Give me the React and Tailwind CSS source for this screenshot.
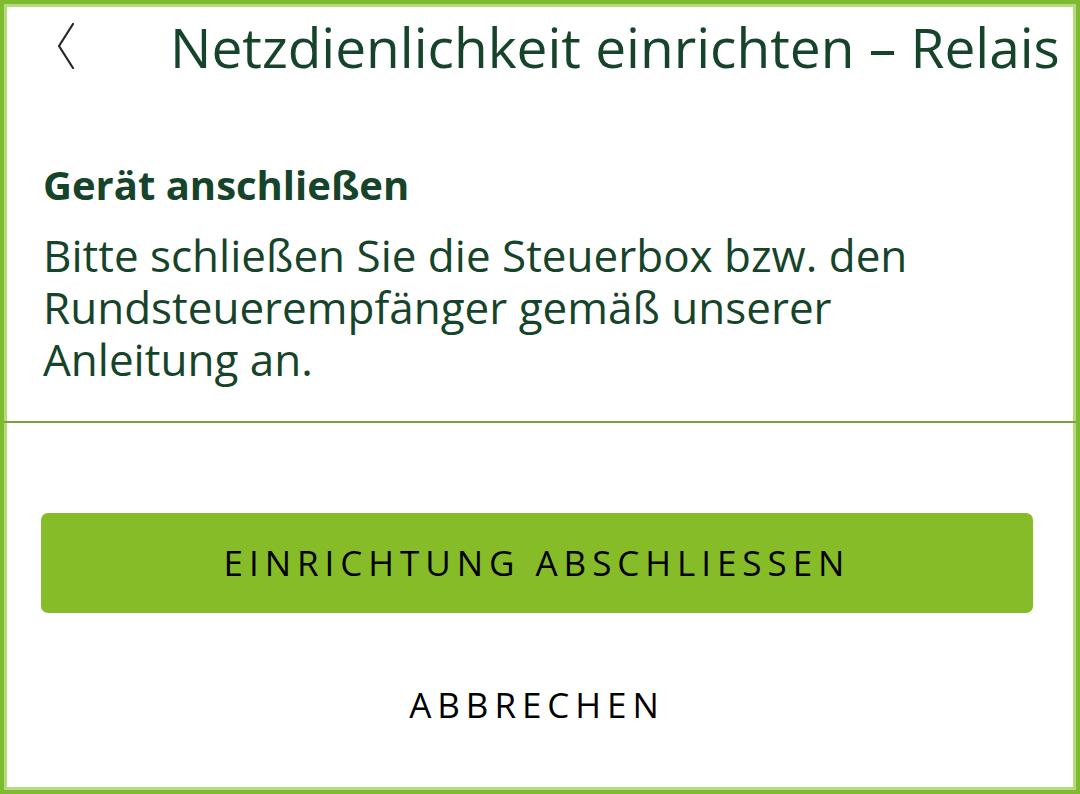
export default function App() {
  const sans = { fontFamily: '"Open Sans", "Noto Sans", sans-serif' };
  return (
    <div
      className="w-[1080px] h-[794px] bg-white border-[4px] border-[#7fba33] shadow-[inset_0_0_0_3px_#b4dc7c] flex flex-col"
      style={sans}
    >
      {/* top bar */}
      <div className="flex items-center h-[84px]">
        <button className="w-[166px] pl-[53px] flex items-center h-full">
          <svg width="18" height="46" viewBox="0 0 18 46" fill="none">
            <path d="M16 1 L2 23 L16 45" stroke="#1f2a24" strokeWidth="2.2" strokeLinecap="round" strokeLinejoin="round" />
          </svg>
        </button>
        <h1 className="text-[55px] leading-none text-[#16442a] whitespace-nowrap">
          Netzdienlichkeit einrichten – Relais
        </h1>
      </div>

      {/* step description */}
      <div className="pl-[39px] pt-[75px] pb-[36px]">
        <h2 className="text-[40px] font-bold leading-[44px] text-[#16442a]">Gerät anschließen</h2>
        <p className="mt-[22px] text-[44px] leading-[52px] text-[#16442a] w-[900px]">
          Bitte schließen Sie die Steuerbox bzw. den Rundsteuerempfänger gemäß unserer Anleitung an.
        </p>
      </div>

      <div className="h-[2px] bg-[#7e9e3c]" />

      {/* actions */}
      <div className="pl-[37px] pr-[43px] pt-[90px] flex flex-col items-center">
        <button className="w-full h-[100px] rounded-[7px] bg-[#85bc28] text-black text-[35px] tracking-[0.17em] font-medium">
          EINRICHTUNG ABSCHLIESSEN
        </button>
        <button className="mt-[72px] text-[35px] leading-[40px] tracking-[0.17em] text-black font-medium">
          ABBRECHEN
        </button>
      </div>
    </div>
  );
}
